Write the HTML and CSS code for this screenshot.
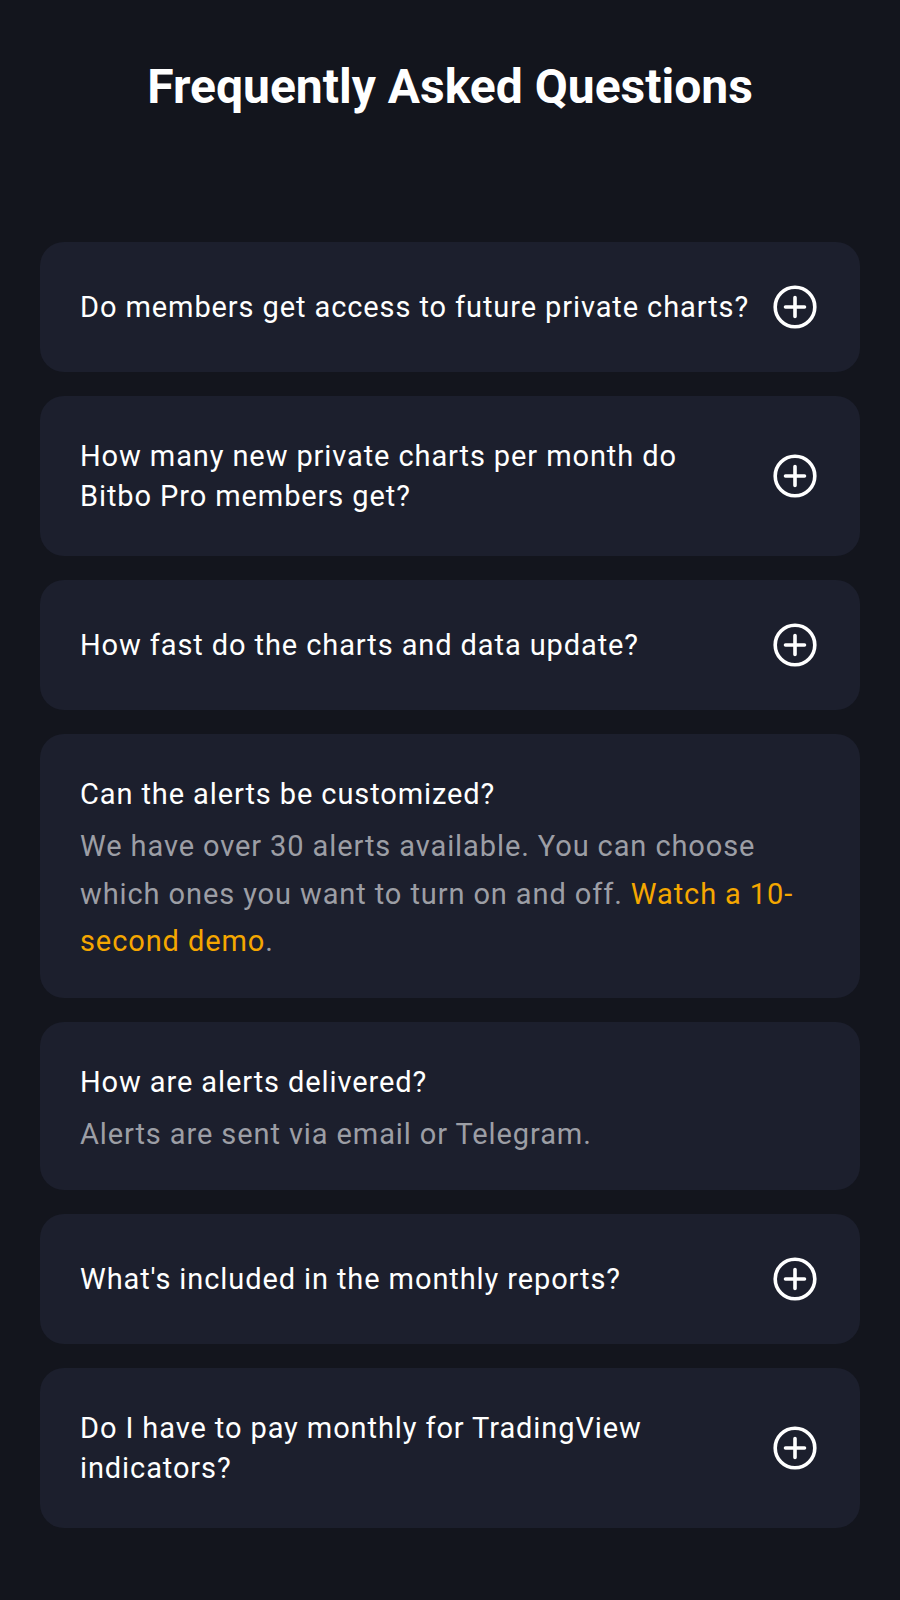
FILE: index.html
```html
<!DOCTYPE html>
<html lang="en">
<head>
<meta charset="utf-8">
<title>Frequently Asked Questions</title>
<link rel="stylesheet" href="styles.css">
</head>
<body>
<main class="page">
  <h1 class="title">Frequently Asked Questions</h1>
  <div class="faq">
    <div class="card">
      <div class="row">
        <p class="question">Do members get access to future private charts?</p>
        <svg class="icon" viewBox="0 0 50 50"><circle cx="25" cy="25" r="19.8"/><path d="M25 15.5v19M15.5 25h19"/></svg>
      </div>
    </div>
    <div class="card">
      <div class="row">
        <p class="question">How many new private charts per month do Bitbo Pro members get?</p>
        <svg class="icon" viewBox="0 0 50 50"><circle cx="25" cy="25" r="19.8"/><path d="M25 15.5v19M15.5 25h19"/></svg>
      </div>
    </div>
    <div class="card">
      <div class="row">
        <p class="question">How fast do the charts and data update?</p>
        <svg class="icon" viewBox="0 0 50 50"><circle cx="25" cy="25" r="19.8"/><path d="M25 15.5v19M15.5 25h19"/></svg>
      </div>
    </div>
    <div class="card open">
      <p class="question">Can the alerts be customized?</p>
      <p class="answer">We have over 30 alerts available. You can choose which ones you want to turn on and off. <a class="link" href="#">Watch a 10-second demo</a>.</p>
    </div>
    <div class="card open">
      <p class="question">How are alerts delivered?</p>
      <p class="answer">Alerts are sent via email or Telegram.</p>
    </div>
    <div class="card">
      <div class="row">
        <p class="question">What's included in the monthly reports?</p>
        <svg class="icon" viewBox="0 0 50 50"><circle cx="25" cy="25" r="19.8"/><path d="M25 15.5v19M15.5 25h19"/></svg>
      </div>
    </div>
    <div class="card">
      <div class="row">
        <p class="question">Do I have to pay monthly for TradingView indicators?</p>
        <svg class="icon" viewBox="0 0 50 50"><circle cx="25" cy="25" r="19.8"/><path d="M25 15.5v19M15.5 25h19"/></svg>
      </div>
    </div>
  </div>
</main>
</body>
</html>
```

FILE: styles.css
```css
* { box-sizing: border-box; }

html, body {
  margin: 0;
  padding: 0;
  background: #13151d;
}

body {
  font-family: Roboto, "Liberation Sans", sans-serif;
  color: #ffffff;
  min-height: 1600px;
}

.page {
  padding: 58px 40px 40px;
}

.title {
  margin: 0;
  text-align: center;
  font-size: 48px;
  line-height: 58px;
  font-weight: 700;
  color: #ffffff;
}

.faq {
  margin-top: 126px;
  display: flex;
  flex-direction: column;
  gap: 24px;
}

.card {
  background: #1c1f2d;
  border-radius: 24px;
  padding: 40px;
}

.card.open {
  padding-bottom: 32px;
}

.row {
  display: flex;
  align-items: center;
  gap: 16px;
}

.question {
  flex: 1;
  margin: 0;
  font-size: 29px;
  letter-spacing: 0.9px;
  line-height: 40px;
  color: #ffffff;
}

.answer {
  margin: 9px 0 0;
  font-size: 29px;
  letter-spacing: 0.9px;
  line-height: 47.5px;
  color: #9c9ea5;
}

.link {
  color: #f5a700;
  text-decoration: none;
}

.icon {
  flex: none;
  width: 50px;
  height: 50px;
  fill: none;
  stroke: #ffffff;
  stroke-width: 3.6;
  stroke-linecap: round;
}
```
